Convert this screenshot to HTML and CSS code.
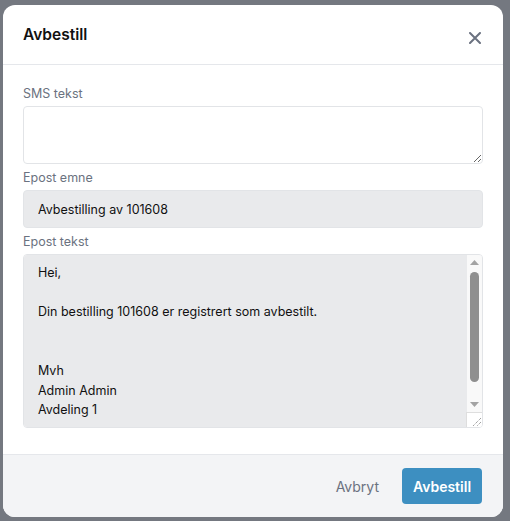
FILE: index.html
```html
<!DOCTYPE html>
<html lang="no">
<head>
<meta charset="utf-8">
<title>Avbestill</title>
<link rel="stylesheet" href="styles.css">
</head>
<body>
<div class="overlay">
  <div class="modal" role="dialog" aria-labelledby="modal-title">
    <div class="modal-header">
      <h2 id="modal-title" class="modal-title">Avbestill</h2>
      <button class="close-btn" aria-label="Lukk">
        <svg width="12" height="12" viewBox="0 0 12 12" fill="none" stroke="currentColor" stroke-width="2" stroke-linecap="round"><path d="M1 1L11 11M11 1L1 11"/></svg>
      </button>
    </div>
    <div class="modal-body">
      <div class="field">
        <label class="field-label" for="sms">SMS tekst</label>
        <textarea id="sms" class="control control-sms"></textarea>
      </div>
      <div class="field">
        <label class="field-label" for="emne">Epost emne</label>
        <input id="emne" class="control control-input" type="text" value="Avbestilling av 101608" readonly>
      </div>
      <div class="field">
        <label class="field-label" for="tekst">Epost tekst</label>
        <div class="mail-wrap">
          <textarea id="tekst" class="control control-mail">Hei,

Din bestilling 101608 er registrert som avbestilt.


Mvh
Admin Admin
Avdeling 1

</textarea>
          <div class="fake-scroll" aria-hidden="true">
            <div class="sb-arrow">
              <svg width="9" height="5" viewBox="0 0 9 5"><path d="M4.5 0L9 5H0Z" fill="#a3a3a3"/></svg>
            </div>
            <div class="sb-track"><div class="sb-thumb"></div></div>
            <div class="sb-arrow">
              <svg width="9" height="5" viewBox="0 0 9 5"><path d="M0 0H9L4.5 5Z" fill="#a3a3a3"/></svg>
            </div>
            <div class="sb-resizer">
              <svg width="14" height="14" viewBox="0 0 14 14" fill="none" stroke="#7a7a7a" stroke-width="1" stroke-dasharray="1 1"><path d="M13 5L5 13M13 9L9 13"/></svg>
            </div>
          </div>
        </div>
      </div>
    </div>
    <div class="modal-footer">
      <button class="btn-cancel">Avbryt</button>
      <button class="btn-primary">Avbestill</button>
    </div>
  </div>
</div>
</body>
</html>
```
FILE: styles.css
```css
* { box-sizing: border-box; }
html, body { margin: 0; padding: 0; }
body {
  font-family: Inter, "Noto Sans", "Liberation Sans", sans-serif;
  background: #ffffff;
  width: 510px;
  height: 521px;
  overflow: hidden;
}
.overlay {
  position: fixed;
  inset: 0;
  background: rgb(116, 120, 128);
  padding: 5px 0 0 3px;
}
.modal {
  width: 500px;
  height: 512px;
  background: #ffffff;
  border-radius: 12px;
  overflow: hidden;
  display: flex;
  flex-direction: column;
}
.modal-header {
  height: 60px;
  flex: none;
  border-bottom: 1px solid #e5e7eb;
  padding: 0 22px 0 20px;
  display: flex;
  align-items: center;
  justify-content: space-between;
}
.modal-title {
  margin: 0;
  font-size: 15.5px;
  font-weight: 600;
  color: #111111;
  line-height: 24px;
}
.close-btn {
  border: 0;
  background: none;
  padding: 0;
  margin-top: 6px;
  color: #6b7280;
  display: flex;
  cursor: pointer;
}
.modal-body {
  padding: 19px 20px 26px;
  display: flex;
  flex-direction: column;
  gap: 4px;
}
.field {
  display: flex;
  flex-direction: column;
  gap: 2px;
}
.field-label {
  font-size: 12.5px;
  line-height: 20px;
  color: #6b7280;
}
.control {
  display: block;
  width: 100%;
  font-family: Inter, "Noto Sans", "Liberation Sans", sans-serif;
  font-size: 12.5px;
  color: #111111;
  border: 1px solid #e2e4e7;
  border-radius: 4px;
  outline: none;
}
.control-sms {
  height: 58px;
  background: #ffffff;
  padding: 8px 14px;
  line-height: 19.6px;
}
.control-input {
  height: 38px;
  background: #e9eaec;
  padding: 0 14px;
}
.mail-wrap {
  position: relative;
}
.control-mail {
  height: 174px;
  background: #e9eaec;
  padding: 8px 14px;
  line-height: 19.6px;
  resize: none;
}
.fake-scroll {
  position: absolute;
  top: 1px;
  right: 1px;
  bottom: 1px;
  width: 15px;
  background: #f9f9f9;
  border-radius: 0 3px 3px 0;
  display: flex;
  flex-direction: column;
}
.sb-arrow {
  height: 15px;
  flex: none;
  display: flex;
  align-items: center;
  justify-content: center;
}
.sb-track {
  flex: 1;
  padding: 2px 3px 0;
}
.sb-thumb {
  height: 110px;
  background: #8f8f8f;
  border-radius: 5px;
}
.sb-resizer {
  height: 15px;
  flex: none;
  background: #ffffff;
  border-top: 1px solid #dedede;
  border-left: 1px solid #dedede;
  margin-left: -1px;
  width: 16px;
  border-radius: 0 0 3px 0;
  display: flex;
  align-items: flex-end;
  justify-content: flex-end;
}
.modal-footer {
  flex: 1;
  border-top: 1px solid #e5e7eb;
  background: #f3f4f6;
  display: flex;
  justify-content: flex-end;
  align-items: center;
  gap: 23px;
  padding: 0 21px;
}
.btn-cancel {
  border: 0;
  background: none;
  font-family: inherit;
  font-size: 14px;
  color: #6b7280;
  padding: 0;
}
.btn-primary {
  border: 0;
  border-radius: 4px;
  background: #3d8fc1;
  color: #ffffff;
  font-family: inherit;
  font-size: 14px;
  font-weight: 600;
  width: 80px;
  height: 36px;
  padding: 0;
}
```
